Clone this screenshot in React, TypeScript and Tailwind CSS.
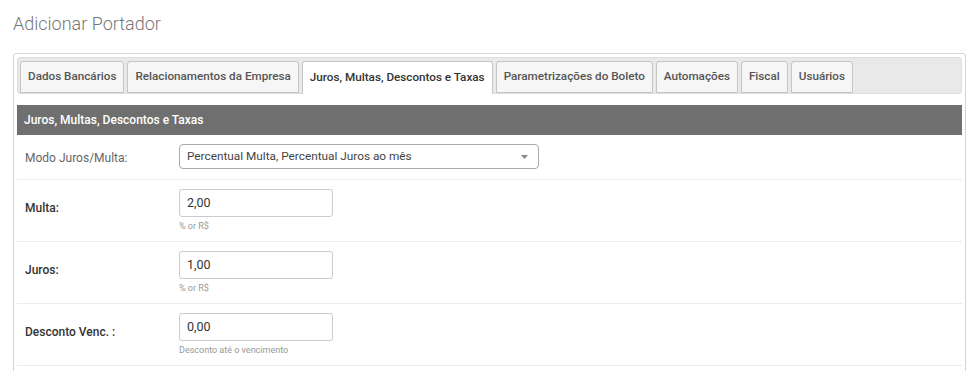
import React from 'react';

const tabs = [
  'Dados Bancários',
  'Relacionamentos da Empresa',
  'Juros, Multas, Descontos e Taxas',
  'Parametrizações do Boleto',
  'Automações',
  'Fiscal',
  'Usuários',
];

const Field = ({ label, value, help }: { label: string; value: string; help: string }) => (
  <div className="flex h-[62px] border-b border-[#ebebeb]">
    <div className="w-[162px] pl-[8px] pt-[19px] text-[12px] font-medium text-[#333]">{label}</div>
    <div className="pt-[9px]">
      <div className="w-[154px] h-[28px] border border-[#ccc] rounded-[3px] px-[7px] flex items-center text-[12.5px] text-[#333]">
        {value}
      </div>
      <div className="mt-[3px] text-[9px] text-[#999]">{help}</div>
    </div>
  </div>
);

const App = () => {
  const active = 2;
  return (
    <div className="min-h-screen bg-white font-['Roboto',sans-serif] pt-[12px]">
      <h1 className="pl-[13px] text-[18px] font-light text-[#777] leading-[24px]">Adicionar Portador</h1>

      <div className="ml-[13px] mt-[17px] w-[953px] border border-[#d4d4d4] rounded-[3px] p-[3px] pb-0">
        {/* Tab bar */}
        <div className="h-[37px] border border-[#dddddd] bg-[#e9e9e9] rounded-[3px] px-[2px] pt-[3px] flex gap-[3px]">
          {tabs.map((t, i) => (
            <div
              key={t}
              className={
                i === active
                  ? 'h-[33px] px-[7px] flex items-center border border-[#c5c5c5] border-b-0 bg-white rounded-t-[3px] text-[11.7px] font-medium text-[#333]'
                  : 'h-[32px] px-[7px] flex items-center border border-[#c5c5c5] bg-[#f6f6f6] rounded-t-[3px] text-[11.7px] font-medium text-[#555]'
              }
            >
              {t}
            </div>
          ))}
        </div>

        <div className="mt-[11px] h-[30px] bg-[#6f6f6f] pl-[7px] flex items-center text-[12px] font-medium text-white">
          Juros, Multas, Descontos e Taxas
        </div>

        <div className="flex h-[45px] border-b border-[#ebebeb]">
          <div className="w-[162px] pl-[8px] pt-[14px] text-[12px] text-[#666]">Modo Juros/Multa:</div>
          <div className="pt-[9px]">
            <div className="w-[360px] h-[25px] border border-[#aaa] rounded-[4px] pl-[7px] pr-[8px] flex items-center justify-between text-[11.8px] text-[#444]">
              <span>Percentual Multa, Percentual Juros ao mês</span>
              <svg width="7" height="4" viewBox="0 0 7 4" className="mr-[2px]">
                <path d="M0 0 L7 0 L3.5 4 Z" fill="#888" />
              </svg>
            </div>
          </div>
        </div>

        <Field label="Multa:" value="2,00" help="% or R$" />
        <Field label="Juros:" value="1,00" help="% or R$" />
        <Field label="Desconto Venc. :" value="0,00" help="Desconto até o vencimento" />
        <div className="h-[20px]" />
      </div>
    </div>
  );
};

export default App;
